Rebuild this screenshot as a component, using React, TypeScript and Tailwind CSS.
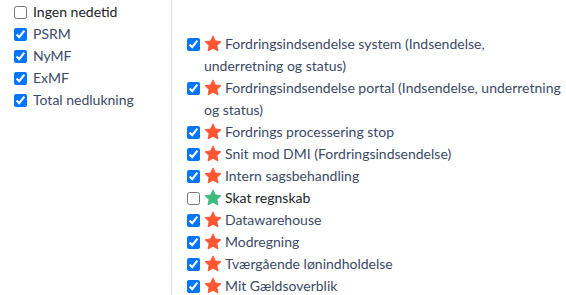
import React from "react";

const Star = ({ color }: { color: string }) => (
  <svg viewBox="0 0 24 24" className="inline-block w-[18px] h-[18px] align-[-4px] mr-[3px]">
    <path
      d="M12 1.2l3.2 6.7 7.4 1-5.4 5.1 1.4 7.3L12 17.7l-6.6 3.6 1.4-7.3-5.4-5.1 7.4-1z"
      fill={color}
      stroke={color}
      strokeWidth="1.2"
      strokeLinejoin="round"
    />
  </svg>
);

const left = [
  { label: "Ingen nedetid", checked: false },
  { label: "PSRM", checked: true },
  { label: "NyMF", checked: true },
  { label: "ExMF", checked: true },
  { label: "Total nedlukning", checked: true },
];

const right = [
  { label: "Fordringsindsendelse system (Indsendelse, underretning og status)", checked: true },
  { label: "Fordringsindsendelse portal (Indsendelse, underretning og status)", checked: true },
  { label: "Fordrings processering stop", checked: true },
  { label: "Snit mod DMI (Fordringsindsendelse)", checked: true },
  { label: "Intern sagsbehandling", checked: true },
  { label: "Skat regnskab", checked: false },
  { label: "Datawarehouse", checked: true },
  { label: "Modregning", checked: true },
  { label: "Tværgående lønindholdelse", checked: true },
  { label: "Mit Gældsoverblik", checked: true },
];

export default function App() {
  return (
    <div
      className="flex w-[566px] h-[295px] bg-white overflow-hidden text-[14px] leading-[22px]"
      style={{ fontFamily: 'Lato, sans-serif' }}
    >
      <div className="w-[171px] shrink-0 pl-[14px] pt-[1px] flex flex-col">
        {left.map((it) => (
          <label key={it.label} className={`flex items-center gap-[6px] ${it.checked ? "text-[#3b4a66]" : "text-[#212529]"}`}>
            <input type="checkbox" checked={it.checked} readOnly className="w-[13px] h-[13px] m-0" />
            <span>{it.label}</span>
          </label>
        ))}
      </div>
      <div className="w-px bg-[#dee2e6] self-stretch" />
      <div className="flex-1 pl-[15px] pt-[33px] flex flex-col">
        {right.map((it) => (
          <div key={it.label} className={`flex items-start ${it.checked ? "text-[#3b4a66]" : "text-[#212529]"}`}>
            <input type="checkbox" checked={it.checked} readOnly className="w-[13px] h-[13px] m-0 mt-[5px] shrink-0" />
            <span className="ml-[4px]">
              <Star color={it.checked ? "#fe5533" : "#3dba7c"} />
              {it.label}
            </span>
          </div>
        ))}
      </div>
    </div>
  );
}
